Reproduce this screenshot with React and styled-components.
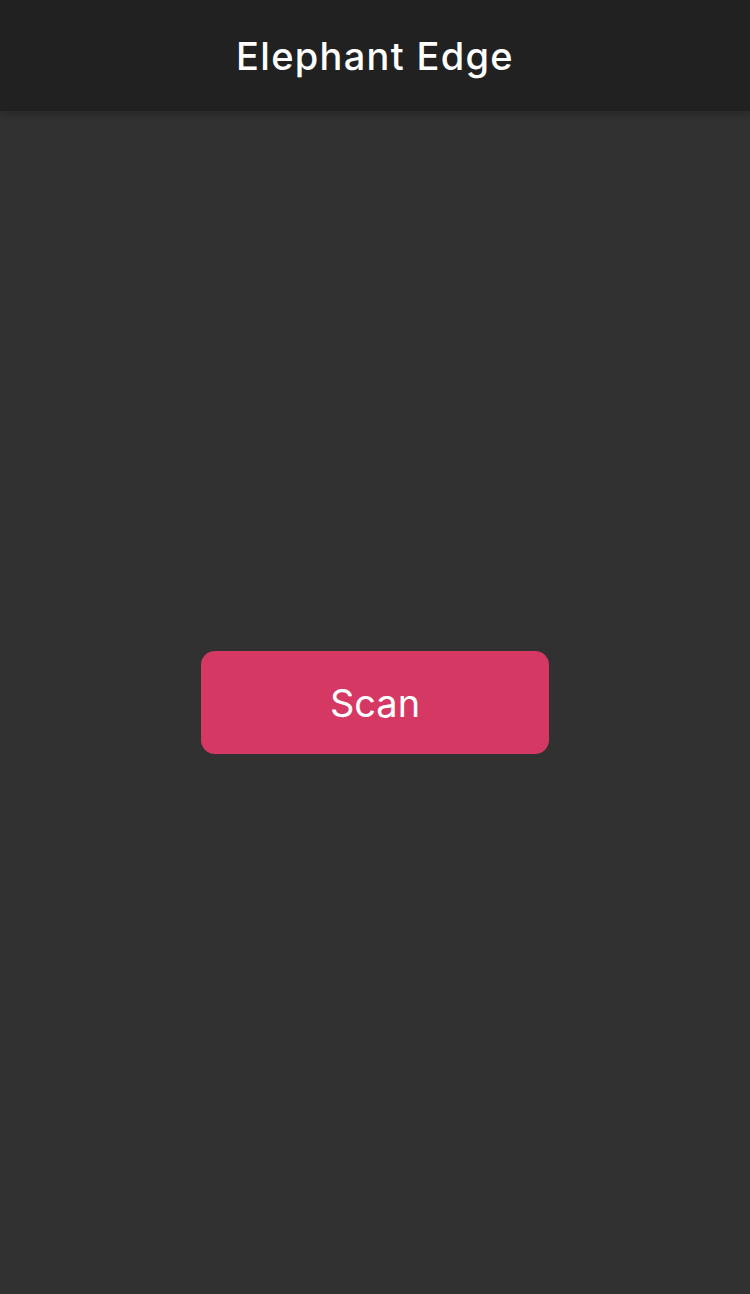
import React from "react";
import styled, { createGlobalStyle } from "styled-components";

const GlobalStyle = createGlobalStyle`
  html, body {
    margin: 0;
    padding: 0;
    background: #313131;
  }
  body {
    font-family: Inter, "Noto Sans", sans-serif;
  }
`;

const Page = styled.div`
  display: flex;
  flex-direction: column;
  height: 1294px;
  background: #313131;
`;

const Header = styled.header`
  height: 111px;
  flex-shrink: 0;
  display: flex;
  align-items: center;
  justify-content: center;
  background: #212121;
  box-shadow: 0 2px 8px rgba(0, 0, 0, 0.25);
  position: relative;
  z-index: 1;
`;

const Title = styled.h1`
  margin: 0;
  color: #ffffff;
  font-size: 38px;
  font-weight: 500;
  letter-spacing: 1.3px;
`;

const Content = styled.main`
  flex: 1;
  display: flex;
  align-items: center;
  justify-content: center;
`;

const ScanButton = styled.button`
  width: 348px;
  height: 103px;
  border: none;
  border-radius: 14px;
  background: #d63864;
  color: #ffffff;
  font-family: Inter, "Noto Sans", sans-serif;
  font-size: 38px;
  font-weight: 400;
  cursor: pointer;
`;

const App = () => {
  return (
    <>
      <GlobalStyle />
      <Page>
        <Header>
          <Title>Elephant Edge</Title>
        </Header>
        <Content>
          <ScanButton>Scan</ScanButton>
        </Content>
      </Page>
    </>
  );
};

export default App;
